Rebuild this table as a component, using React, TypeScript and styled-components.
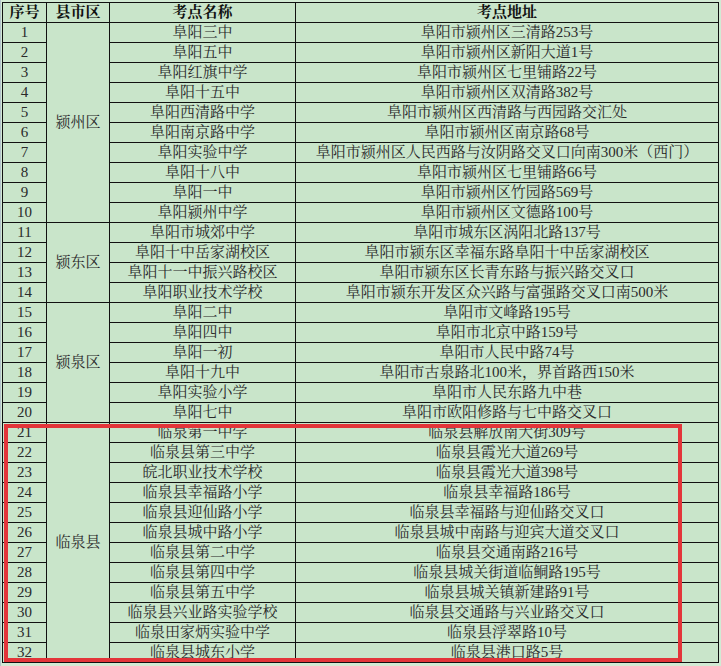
import React from "react";
import styled, { createGlobalStyle } from "styled-components";

const Global = createGlobalStyle`
  html, body { margin: 0; padding: 0; background: #d2ead4; }
  body { font-family: "Liberation Serif", "Noto Serif CJK SC", "Noto Sans CJK SC", serif; }
`;

const Page = styled.div`
  position: relative;
  width: 721px;
  height: 666px;
  padding: 2px 0 0 2px;
  box-sizing: border-box;
  box-shadow: inset 1px 0 0 #b3c3cb;
  overflow: hidden;
`;

const Sheet = styled.div`
  display: grid;
  grid-template-columns: 43px 62px 185px 422px;
  grid-template-rows: repeat(33, 19px);
  gap: 1px;
  padding: 1px;
  background: #111;
  width: max-content;
`;

const Cell = styled.div<{ $col: number; $span?: number; $head?: boolean }>`
  grid-column: ${(p) => p.$col};
  grid-row: span ${(p) => p.$span ?? 1};
  background: #c9e5ca;
  display: flex;
  align-items: center;
  justify-content: center;
  font-size: 15px;
  line-height: 19px;
  color: ${(p) => (p.$head ? "#111" : "#2a2a2a")};
  font-weight: ${(p) => (p.$head ? 700 : 400)};
  white-space: nowrap;
  overflow: hidden;
`;

const Highlight = styled.div`
  position: absolute;
  left: 4px;
  top: 424px;
  width: 678px;
  height: 238px;
  box-sizing: border-box;
  border: 4px solid #e3353a;
  pointer-events: none;
`;

type Row = [string, string];

const groups: { district: string; rows: Row[] }[] = [
  {
    district: "颍州区",
    rows: [
      ["阜阳三中", "阜阳市颍州区三清路253号"],
      ["阜阳五中", "阜阳市颍州区新阳大道1号"],
      ["阜阳红旗中学", "阜阳市颍州区七里铺路22号"],
      ["阜阳十五中", "阜阳市颍州区双清路382号"],
      ["阜阳西清路中学", "阜阳市颍州区西清路与西园路交汇处"],
      ["阜阳南京路中学", "阜阳市颍州区南京路68号"],
      ["阜阳实验中学", "阜阳市颍州区人民西路与汝阴路交叉口向南300米（西门）"],
      ["阜阳十八中", "阜阳市颍州区七里铺路66号"],
      ["阜阳一中", "阜阳市颍州区竹园路569号"],
      ["阜阳颍州中学", "阜阳市颍州区文德路100号"],
    ],
  },
  {
    district: "颍东区",
    rows: [
      ["阜阳市城郊中学", "阜阳市城东区涡阳北路137号"],
      ["阜阳十中岳家湖校区", "阜阳市颍东区幸福东路阜阳十中岳家湖校区"],
      ["阜阳十一中振兴路校区", "阜阳市颍东区长青东路与振兴路交叉口"],
      ["阜阳职业技术学校", "阜阳市颍东开发区众兴路与富强路交叉口南500米"],
    ],
  },
  {
    district: "颍泉区",
    rows: [
      ["阜阳二中", "阜阳市文峰路195号"],
      ["阜阳四中", "阜阳市北京中路159号"],
      ["阜阳一初", "阜阳市人民中路74号"],
      ["阜阳十九中", "阜阳市古泉路北100米，界首路西150米"],
      ["阜阳实验小学", "阜阳市人民东路九中巷"],
      ["阜阳七中", "阜阳市欧阳修路与七中路交叉口"],
    ],
  },
  {
    district: "临泉县",
    rows: [
      ["临泉第一中学", "临泉县解放南大街309号"],
      ["临泉县第三中学", "临泉县霞光大道269号"],
      ["皖北职业技术学校", "临泉县霞光大道398号"],
      ["临泉县幸福路小学", "临泉县幸福路186号"],
      ["临泉县迎仙路小学", "临泉县幸福路与迎仙路交叉口"],
      ["临泉县城中路小学", "临泉县城中南路与迎宾大道交叉口"],
      ["临泉县第二中学", "临泉县交通南路216号"],
      ["临泉县第四中学", "临泉县城关街道临鲖路195号"],
      ["临泉县第五中学", "临泉县城关镇新建路91号"],
      ["临泉县兴业路实验学校", "临泉县交通路与兴业路交叉口"],
      ["临泉田家炳实验中学", "临泉县浮翠路10号"],
      ["临泉县城东小学", "临泉县港口路5号"],
    ],
  },
];

export default function App() {
  let n = 0;
  const cells: React.ReactNode[] = [];
  groups.forEach((g, gi) => {
    g.rows.forEach((r, ri) => {
      n += 1;
      cells.push(
        <Cell key={`n${n}`} $col={1}>
          {n}
        </Cell>
      );
      if (ri === 0) {
        cells.push(
          <Cell key={`d${gi}`} $col={2} $span={g.rows.length}>
            {g.district}
          </Cell>
        );
      }
      cells.push(
        <Cell key={`s${n}`} $col={3}>
          {r[0]}
        </Cell>
      );
      cells.push(
        <Cell key={`a${n}`} $col={4}>
          {r[1]}
        </Cell>
      );
    });
  });

  return (
    <>
      <Global />
      <Page>
        <Sheet>
          <Cell $col={1} $head>序号</Cell>
          <Cell $col={2} $head>县市区</Cell>
          <Cell $col={3} $head>考点名称</Cell>
          <Cell $col={4} $head>考点地址</Cell>
          {cells}
        </Sheet>
        <Highlight />
      </Page>
    </>
  );
}
